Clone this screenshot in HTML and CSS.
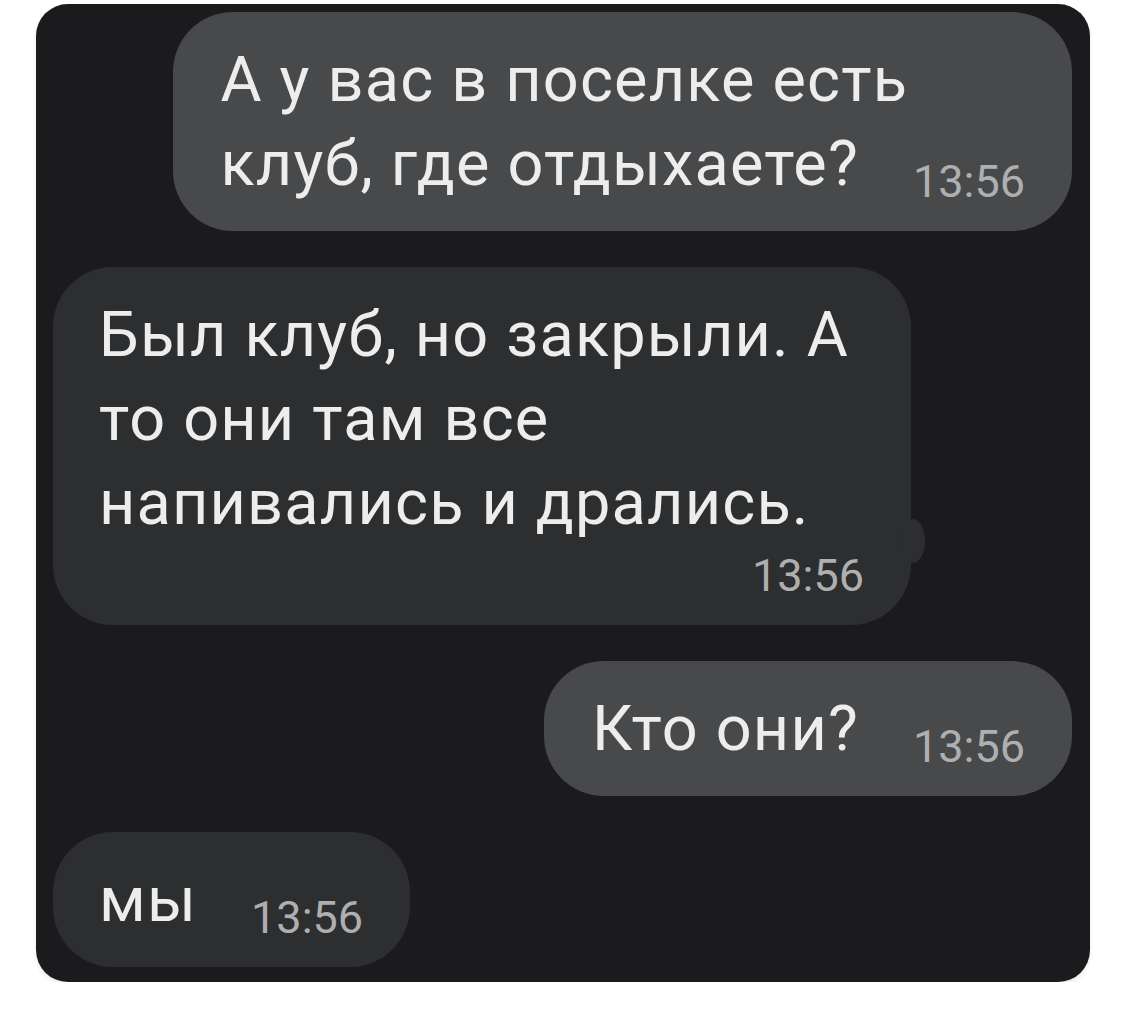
FILE: index.html
```html
<!DOCTYPE html>
<html lang="ru">
<head>
  <meta charset="UTF-8">
  <meta name="viewport" content="width=device-width, initial-scale=1.0">
  <title>Чат</title>
  <link rel="stylesheet" href="styles.css">
</head>
<body>

<div class="chat">
  <div class="row out">
    <div class="bubble">А у вас в поселке есть<br>клуб, где отдыхаете?<span class="time">13:56</span></div>
  </div>

  <div class="row in">
    <div class="bubble tail">
      Был клуб, но закрыли. А<br>то они там все<br>напивались и дрались.
      <div class="time block">13:56</div>
    </div>
  </div>

  <div class="row out">
    <div class="bubble">Кто они?<span class="time">13:56</span></div>
  </div>

  <div class="row in">
    <div class="bubble">мы<span class="time">13:56</span></div>
  </div>
</div>

</body>
</html>
```
FILE: styles.css
```css
body {
  margin: 0;
  background: #fff;
  font-family: 'Roboto', 'Liberation Sans', sans-serif;
}
.chat {
  margin: 4px 37px 0 36px;
  padding: 8px 18px 15px 17px;
  background: #1b1b1d;
  border-radius: 32px;
  box-shadow: 0 3px 4px rgba(0, 0, 0, 0.08);
  display: flex;
  flex-direction: column;
  gap: 36px;
}
.row {
  display: flex;
}
.row.out {
  justify-content: flex-end;
}
.row.in {
  justify-content: flex-start;
}
.bubble {
  position: relative;
  padding: 26px 47px 25px 48px;
  border-radius: 60px;
  font-size: 63px;
  line-height: 84px;
  letter-spacing: 1.2px;
  color: #ededed;
  white-space: nowrap;
}
.out .bubble {
  background: #48494b;
}
.in .bubble {
  background: #2d2e30;
  padding-left: 46px;
}
.time {
  display: inline-block;
  margin-left: 54px;
  font-size: 45px;
  line-height: 1;
  letter-spacing: 0;
  vertical-align: -12px;
  color: #aeafb1;
}
.time.block {
  display: block;
  margin: 8px -15px 0 0;
  text-align: right;
  vertical-align: baseline;
}
.bubble.tail {
  padding-bottom: 27px;
  padding-right: 62px;
}
.bubble.tail::after {
  content: "";
  position: absolute;
  right: -14px;
  top: 252px;
  width: 24px;
  height: 44px;
  border-radius: 50%;
  background: #2d2e30;
}
```
